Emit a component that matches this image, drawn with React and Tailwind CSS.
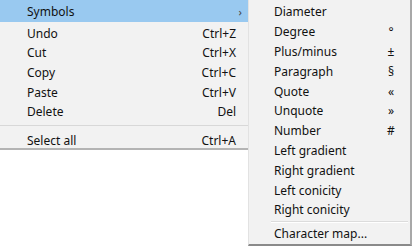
const mainItems = [
  { label: "Undo", key: "Ctrl+Z" },
  { label: "Cut", key: "Ctrl+X" },
  { label: "Copy", key: "Ctrl+C" },
  { label: "Paste", key: "Ctrl+V" },
  { label: "Delete", key: "Del" },
];

const symbols = [
  { label: "Diameter", sym: "" },
  { label: "Degree", sym: "°" },
  { label: "Plus/minus", sym: "±" },
  { label: "Paragraph", sym: "§" },
  { label: "Quote", sym: "«" },
  { label: "Unquote", sym: "»" },
  { label: "Number", sym: "#" },
  { label: "Left gradient", sym: "" },
  { label: "Right gradient", sym: "" },
  { label: "Left conicity", sym: "" },
  { label: "Right conicity", sym: "" },
];

function Row({ label, right }) {
  return (
    <div className="flex h-[19.6px] shrink-0 items-center pl-[27px] pr-[12px] pt-[2px]">
      <span className="flex-1">{label}</span>
      <span>{right}</span>
    </div>
  );
}

export default function App() {
  return (
    <div
      className="flex h-[246px] w-[412px] bg-white text-[12px] text-[#111]"
      style={{ fontFamily: '"Noto Sans", "Open Sans", sans-serif' }}
    >
      <div className="flex h-[150px] w-[248px] flex-col border-b-2 border-[#b4b4b4] bg-[#f2f2f2]">
        <div className="flex h-[22px] shrink-0 items-center bg-[#99c9f0] pl-[27px] pr-[6px] pt-[2px]">
          <span className="flex-1">Symbols</span>
          <span className="text-[11px] text-[#444]">›</span>
        </div>
        <div className="h-[1px] shrink-0" />
        {mainItems.map((it) => (
          <Row key={it.label} label={it.label} right={it.key} />
        ))}
        <div className="my-[4px] h-[1px] shrink-0 bg-[#d8d8d8]" />
        <Row label="Select all" right="Ctrl+A" />
      </div>

      <div className="flex h-[246px] flex-1 flex-col border-b-2 border-l border-r-2 border-b-[#8a8a8a] border-l-[#e2e2e2] border-r-[#a8a8a8] bg-[#f2f2f2] pt-[2px]">
        {symbols.map((s) => (
          <div key={s.label} className="flex h-[19.8px] shrink-0 items-center pl-[25px] pt-[1px]">
            <span className="flex-1">{s.label}</span>
            <span className="w-[38px] text-center">{s.sym}</span>
          </div>
        ))}
        <div className="ml-[22px] mr-[2px] mt-[1px] mb-[1px] h-[2px] shrink-0 border-t border-b border-t-[#dcdcdc] border-b-white" />
        <div className="flex h-[20px] shrink-0 items-center pl-[25px] pt-[1px]">Character map...</div>
      </div>
    </div>
  );
}
